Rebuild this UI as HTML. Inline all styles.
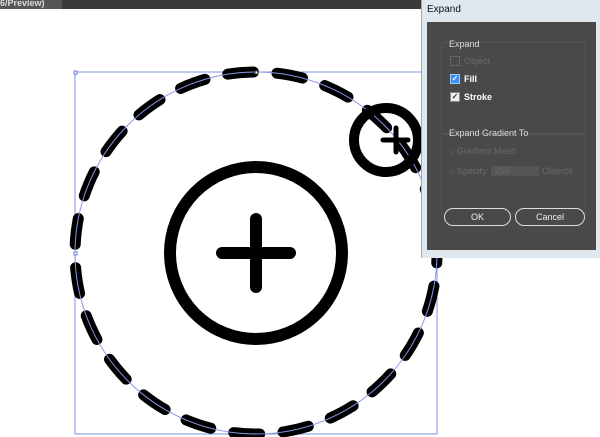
<!DOCTYPE html>
<html style="overflow:hidden;width:600px;height:437px"><head><style>
body{margin:0;width:600px;height:437px;overflow:hidden;background:#fff;font-family:"Liberation Sans",sans-serif;position:relative}
.top{position:absolute;left:0;top:0;width:600px;height:9px;background:#3a3a3a}
.tab{position:absolute;left:0;top:0;width:62px;height:9px;background:#555;color:#ddd;font-size:9px;line-height:6px;font-weight:bold}
.dlg{position:absolute;left:421px;top:0;width:179px;height:258px;background:#dfe7ef;border-left:1px solid #9ab}
.title{position:absolute;left:5px;top:4px;font-size:10px;color:#111}
.in{position:absolute;left:5px;top:22px;width:169px;height:228px;background:#4a4948}
.lbl{position:absolute;font-size:9px;color:#ddd}
.dim{color:#6a6a6a}
.grp{position:absolute;border:1px solid #555;border-radius:2px}
.cb{position:absolute;width:8px;height:8px;border:1px solid #888;background:#eee;color:#333;font-size:8px;line-height:8px;text-align:center;font-weight:bold}
.btn{position:absolute;height:16px;border:1px solid #ddd;border-radius:9px;background:#4a4948;color:#eee;font-size:9px;text-align:center;line-height:16px}
</style></head><body>
<div class="top"><div class="tab">6/Preview)</div></div>
<svg width="600" height="437" style="position:absolute;left:0;top:0;display:block;overflow:hidden">
<rect x="75" y="72" width="362" height="362" fill="none" stroke="#7f90e0" stroke-width="1"/>
<circle cx="256" cy="253" r="181" fill="none" stroke="#000" stroke-width="11" stroke-linecap="round" stroke-dasharray="26 23.43" transform="rotate(-99 256 253)"/>
<circle cx="256" cy="253" r="181" fill="none" stroke="#8898e8" stroke-width="1"/>
<circle cx="256" cy="253" r="86" fill="none" stroke="#000" stroke-width="12"/>
<path d="M222 253H290M256 219V287" stroke="#000" stroke-width="12" stroke-linecap="round"/>
<circle cx="386" cy="140" r="32" fill="none" stroke="#000" stroke-width="10"/>
<path d="M383 140H408M396 128V152" stroke="#000" stroke-width="5" stroke-linecap="round"/>
<rect x="74" y="71" width="3" height="3" fill="#fff" stroke="#6a80d8"/>
<rect x="255" y="71" width="3" height="3" fill="#fff" stroke="#333"/>
<rect x="74" y="252" width="3" height="3" fill="#fff" stroke="#6a80d8"/>
</svg>
<div class="dlg"><div class="title">Expand</div>
<div class="in">
<div class="grp" style="left:14px;top:20px;width:143px;height:90px"></div>
<div class="lbl" style="left:22px;top:17px">Expand</div>
<div class="cb" style="left:23px;top:34px;background:#4a4948;border-color:#666"></div><div class="lbl dim" style="left:37px;top:34px">Object</div>
<div class="cb" style="left:23px;top:52px;background:#3b8ef0;border-color:#9cf;color:#fff">✓</div><div class="lbl" style="left:37px;top:52px;font-weight:bold;color:#fff">Fill</div>
<div class="cb" style="left:23px;top:70px">✓</div><div class="lbl" style="left:37px;top:70px;font-weight:bold;color:#fff">Stroke</div>
<div class="grp" style="left:14px;top:112px;width:143px;height:78px"></div>
<div class="lbl" style="left:22px;top:106px">Expand Gradient To</div>
<div class="lbl dim" style="left:22px;top:124px">○ Gradient Mesh</div>
<div class="lbl dim" style="left:22px;top:144px">○ Specify: <span style="display:inline-block;width:45px;background:#555;padding-left:3px">255</span> Objects</div>
<div class="btn" style="left:17px;top:186px;width:65px">OK</div>
<div class="btn" style="left:88px;top:186px;width:68px">Cancel</div>
</div></div>
</body></html>
